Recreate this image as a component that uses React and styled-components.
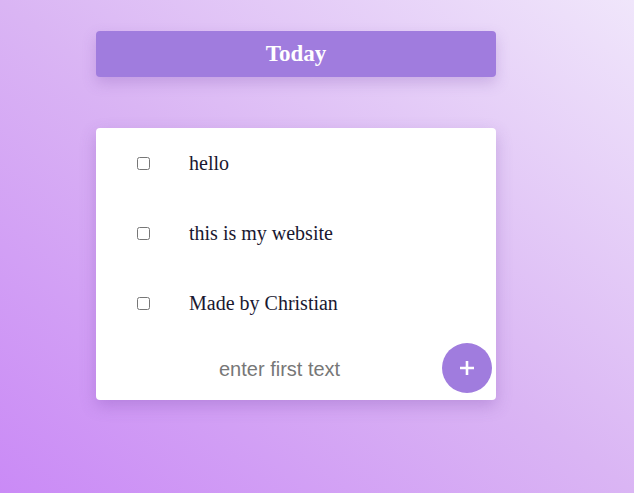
import React from "react";
import styled, { createGlobalStyle } from "styled-components";

const GlobalStyle = createGlobalStyle`
  html, body {
    margin: 0;
    padding: 0;
  }
  body {
    min-height: 100vh;
    background: linear-gradient(to top right, #ca8af6 0%, #dab5f4 50%, #f0e6fb 100%);
    font-family: "Liberation Serif", "Times New Roman", serif;
  }
`;

const Page = styled.div`
  min-height: 100vh;
  padding: 31px 0 0 96px;
  box-sizing: border-box;
`;

const Header = styled.div`
  width: 400px;
  height: 46px;
  border-radius: 4px;
  background: #a07cde;
  box-shadow: 0 6px 14px rgba(120, 70, 170, 0.25);
  display: flex;
  align-items: center;
  justify-content: center;
  color: #fff;
  font-size: 23px;
  font-weight: bold;
`;

const Card = styled.div`
  width: 400px;
  margin-top: 51px;
  background: #fff;
  border-radius: 4px;
  box-shadow: 0 6px 16px rgba(120, 70, 170, 0.3);
`;

const Row = styled.label`
  height: 70px;
  display: grid;
  grid-template-columns: 41px 52px 1fr;
  align-items: center;
  font-size: 20px;
  color: #1a1830;
`;

const Check = styled.input`
  grid-column: 2;
  width: 13px;
  height: 13px;
  margin: 0;
`;

const Label = styled.span`
  grid-column: 3;
`;

const InputRow = styled.div`
  height: 62px;
  display: flex;
  align-items: center;
  padding: 0 4px 0 123px;
`;

const TextInput = styled.input`
  flex: 1;
  min-width: 0;
  border: none;
  outline: none;
  background: transparent;
  padding: 0;
  font-family: "Liberation Sans", Arial, sans-serif;
  font-size: 20px;
  color: #333;
  &::placeholder {
    color: #777;
  }
`;

const AddButton = styled.button`
  width: 50px;
  height: 50px;
  border-radius: 50%;
  border: none;
  background: #a07cde;
  display: flex;
  align-items: center;
  justify-content: center;
  padding: 0;
  margin-top: -2px;
  cursor: pointer;
`;

const todos = ["hello", "this is my website", "Made by Christian"];

export default function App() {
  return (
    <>
      <GlobalStyle />
      <Page>
        <Header>Today</Header>
        <Card>
          {todos.map((t) => (
            <Row key={t}>
              <Check type="checkbox" />
              <Label>{t}</Label>
            </Row>
          ))}
          <InputRow>
            <TextInput placeholder="enter first text" />
            <AddButton>
              <svg width="16" height="16" viewBox="0 0 16 16">
                <path d="M8 1v14M1 8h14" stroke="#fff" strokeWidth="2.6" />
              </svg>
            </AddButton>
          </InputRow>
        </Card>
      </Page>
    </>
  );
}
